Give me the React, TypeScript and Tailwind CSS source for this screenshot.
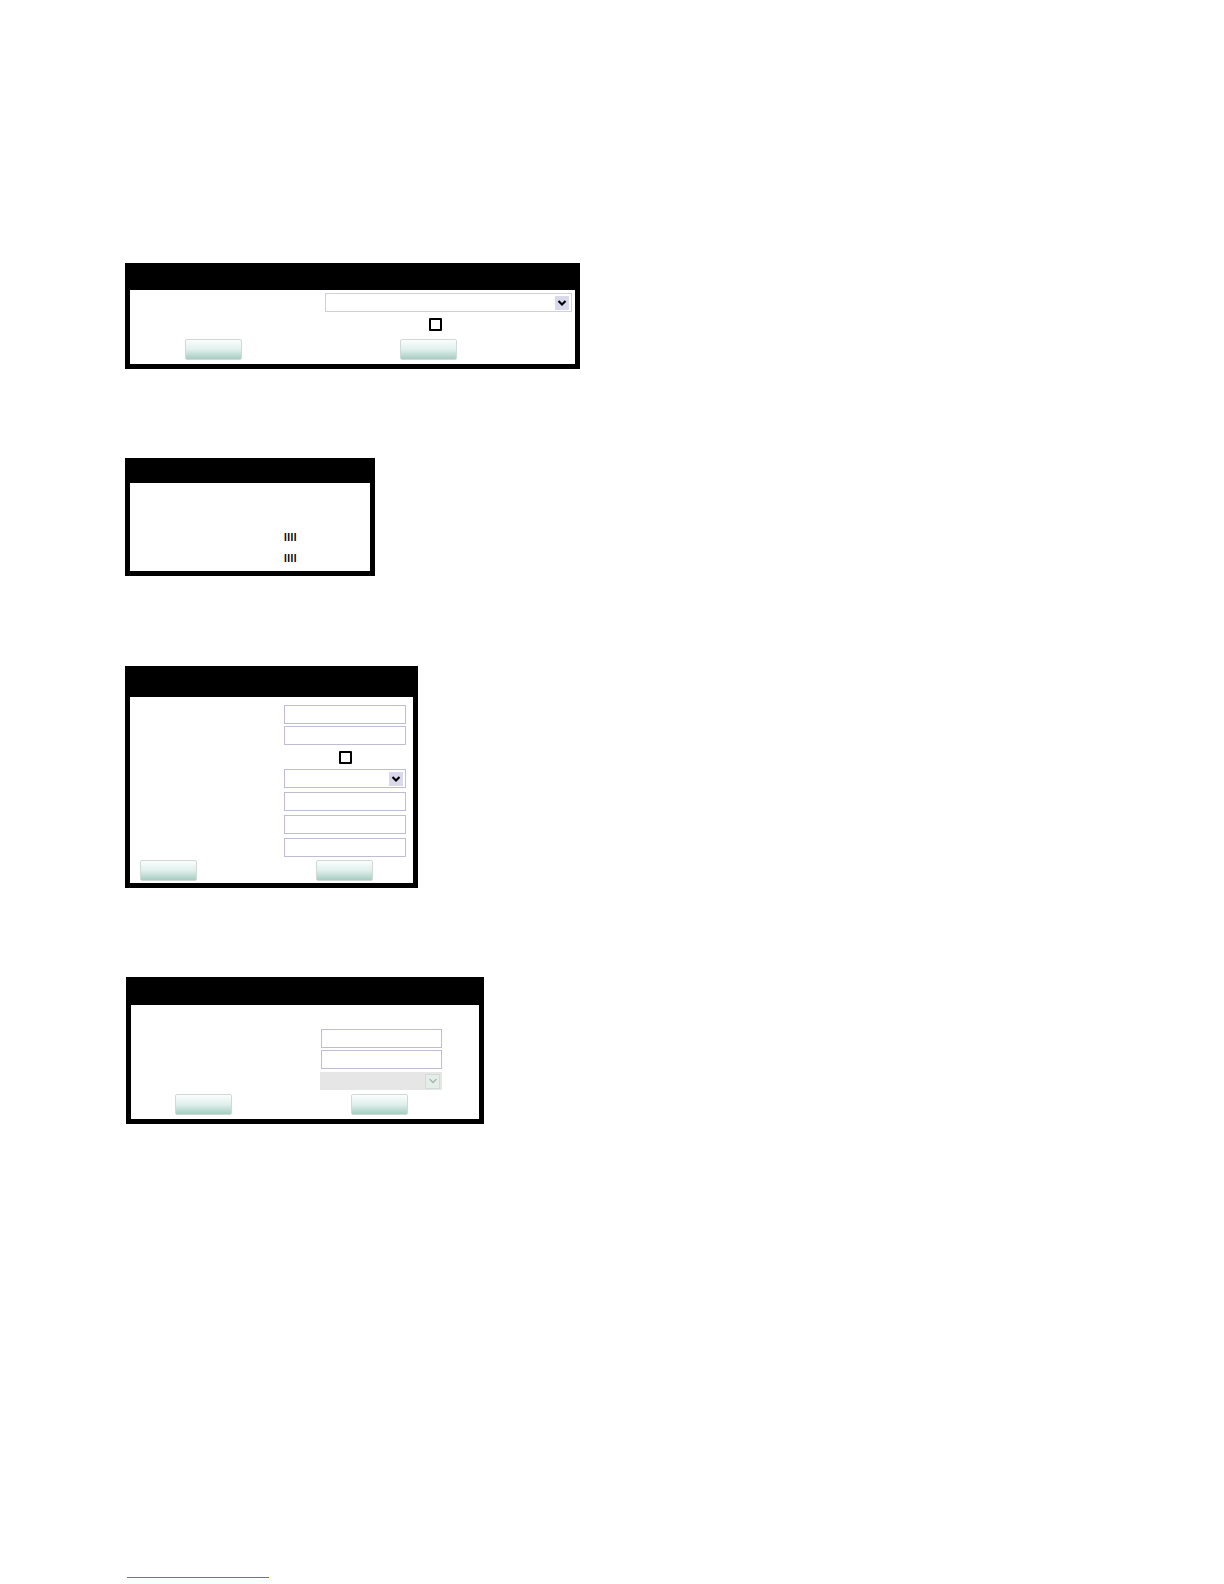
import React from "react";

// Blank form panels: black title bar, thick black frame, empty controls.

const Button = () => (
  <div className="h-[21px] w-[57px] rounded-[2px] border border-[#cfdad6] bg-linear-to-b from-[#fbfefd] via-[#e0f0ec] to-[#a6cdc2]" />
);

const Input = ({ wide = true }: { wide?: boolean }) => (
  <div
    className={
      wide
        ? "h-[19px] w-[122px] border border-[#bdbdd8] bg-white"
        : "h-[19px] w-[121px] border border-[#bdbdd8] bg-white"
    }
  />
);

const Checkbox = () => (
  <div className="h-[13px] w-[13px] rounded-[1px] border-2 border-black bg-white" />
);

const Chevron = ({ disabled = false }: { disabled?: boolean }) => (
  <div
    className={
      disabled
        ? "flex h-[15px] w-[15px] items-center justify-center border border-[#cfdcd6] bg-[#e3eee9]"
        : "flex h-[14px] w-[14px] items-center justify-center bg-[#d9d9ee]"
    }
  >
    <svg width="10" height="8" viewBox="0 0 10 8">
      <polyline
        points="1.5,2 5,5.5 8.5,2"
        fill="none"
        stroke={disabled ? "#a9b3b0" : "#000"}
        strokeWidth={disabled ? 1.3 : 2.2}
      />
    </svg>
  </div>
);

const Select = ({ w, disabled = false }: { w: "wide" | "narrow" | "off"; disabled?: boolean }) => {
  const cls =
    w === "wide"
      ? "h-[19px] w-[247px] border border-[#d0d0d8] bg-white"
      : w === "narrow"
      ? "h-[19px] w-[122px] border border-[#bdbdd8] bg-white"
      : "h-[18px] w-[122px] bg-[#e6e6e6]";
  return (
    <div className={`${cls} flex items-center justify-end pr-[2px]`}>
      <Chevron disabled={disabled} />
    </div>
  );
};

const Panel = ({
  width,
  header,
  children,
}: {
  width: string;
  header: string;
  children: React.ReactNode;
}) => (
  <div className={`${width} border-x-[5px] border-b-[5px] border-black bg-white`}>
    <div className={`${header} -mx-[5px] bg-black`} />
    {children}
  </div>
);

export default function App() {
  return (
    <div
      className="flex min-h-[1584px] w-[1224px] flex-col bg-white pl-[125px] pt-[263px]"
      style={{ fontFamily: '"Liberation Sans", Arial, sans-serif' }}
    >
      {/* panel 1 */}
      <Panel width="w-[455px]" header="h-[27px]">
        <div className="flex flex-col pb-[4px] pt-[3px]">
          <div className="ml-[195px]">
            <Select w="wide" />
          </div>
          <div className="ml-[299px] mt-[6px]">
            <Checkbox />
          </div>
          <div className="ml-[55px] mt-[8px] flex gap-[158px]">
            <Button />
            <Button />
          </div>
        </div>
      </Panel>

      {/* panel 2 */}
      <div className="mt-[89px]">
        <Panel width="w-[250px]" header="h-[25px]">
          <div className="flex flex-col pb-[2px] pt-[2px]">
            <div className="h-[21px]" />
            <div className="h-[21px]" />
            <div className="flex h-[21px] items-center pl-[154px]">
              <span className="text-[10px] font-bold leading-none tracking-[0.5px] text-black antialiased">IIII</span>
            </div>
            <div className="flex h-[21px] items-center pl-[154px]">
              <span className="text-[10px] font-bold leading-none tracking-[0.5px] text-black antialiased">IIII</span>
            </div>
          </div>
        </Panel>
      </div>

      {/* panel 3 */}
      <div className="mt-[90px]">
        <Panel width="w-[293px]" header="h-[31px]">
          <div className="flex flex-col pb-[2px] pt-[8px]">
            <div className="ml-[154px] flex flex-col gap-[2px]">
              <Input />
              <Input />
            </div>
            <div className="ml-[209px] mt-[6px]">
              <Checkbox />
            </div>
            <div className="ml-[154px] mt-[5px] flex flex-col gap-[4px]">
              <Select w="narrow" />
              <Input />
              <Input />
              <Input />
            </div>
            <div className="ml-[10px] mt-[3px] flex gap-[119px]">
              <Button />
              <Button />
            </div>
          </div>
        </Panel>
      </div>

      {/* panel 4 */}
      <div className="ml-px mt-[89px]">
        <Panel width="w-[358px]" header="h-[28px]">
          <div className="flex flex-col pb-[4px] pt-[24px]">
            <div className="ml-[190px] flex flex-col gap-[2px]">
              <Input wide={false} />
              <Input wide={false} />
            </div>
            <div className="ml-[189px] mt-[3px]">
              <Select w="off" disabled />
            </div>
            <div className="ml-[44px] mt-[4px] flex gap-[119px]">
              <Button />
              <Button />
            </div>
          </div>
        </Panel>
      </div>

      {/* footnote rule */}
      <div className="ml-[2px] mt-[453px] h-px w-[142px] bg-[#5b6fd3]" />
    </div>
  );
}
